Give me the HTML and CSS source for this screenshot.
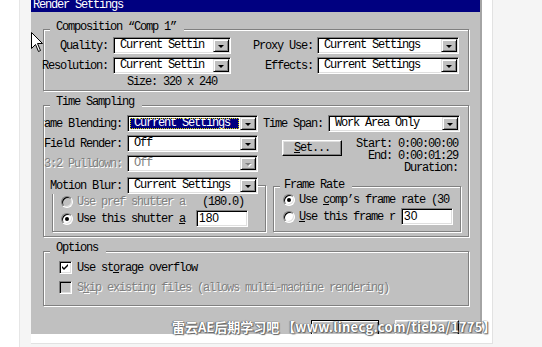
FILE: index.html
```html
<!DOCTYPE html>
<html lang="en">
<head>
  <meta charset="UTF-8" />
  <title>Render Settings</title>
  <link rel="stylesheet" href="styles.css">
</head>
<body>
  <div class="page">
    <div class="side"></div>
    <div class="frame">
      <div class="dialog">
        <div class="titlebar">Render Settings</div>

        <div class="group comp">
          <div class="group-title">Composition “Comp 1”</div>
          <div class="cols">
            <div class="col col-a">
              <div class="row">
                <span class="lbl">Quality:</span>
                <div class="combo c118"><span class="val">Current Settin</span><span class="drop"></span></div>
              </div>
              <div class="row">
                <span class="lbl">Resolution:</span>
                <div class="combo c118"><span class="val">Current Settin</span><span class="drop"></span></div>
              </div>
              <div class="size">Size: 320 x 240</div>
            </div>
            <div class="col col-b">
              <div class="row">
                <span class="lbl">Proxy Use:</span>
                <div class="combo c142"><span class="val">Current Settings</span><span class="drop"></span></div>
              </div>
              <div class="row">
                <span class="lbl">Effects:</span>
                <div class="combo c142"><span class="val">Current Settings</span><span class="drop"></span></div>
              </div>
            </div>
          </div>
        </div>

        <div class="group time">
          <div class="group-title">Time Sampling</div>
          <div class="cols">
            <div class="col col-a">
              <div class="row">
                <span class="lbl">Frame Blending:</span>
                <div class="combo c131"><span class="val sel">Current Settings</span><span class="drop"></span></div>
              </div>
              <div class="row">
                <span class="lbl">Field Render:</span>
                <div class="combo c131"><span class="val">Off</span><span class="drop"></span></div>
              </div>
              <div class="row disabled">
                <span class="lbl">3:2 Pulldown:</span>
                <div class="combo c131"><span class="val">Off</span><span class="drop"></span></div>
              </div>
            </div>
            <div class="col col-b">
              <div class="row span-row">
                <span class="lbl">Time Span:</span>
                <div class="combo c132"><span class="val">Work Area Only</span><span class="drop"></span></div>
              </div>
              <div class="set-row">
                <button class="btn set" type="button"><u>S</u>et...</button>
                <div class="times">
                  <div>Start: 0:00:00:00</div>
                  <div>End: 0:00:01:29</div>
                  <div>Duration:</div>
                </div>
              </div>
            </div>
          </div>

          <div class="subs">
            <div class="group sub blur">
              <div class="row legend">
                <span class="lbl">Motion Blur:</span>
                <div class="combo c131"><span class="val">Current Settings</span><span class="drop"></span></div>
              </div>
              <div class="opt disabled">
                <span class="radio"></span>
                <span class="opt-text">Use pref shutter a</span>
                <span class="note">(180.0)</span>
              </div>
              <div class="opt">
                <span class="radio on"></span>
                <span class="opt-text">Use this shutter <u>a</u></span>
                <span class="edit">180</span>
              </div>
            </div>
            <div class="group sub rate">
              <div class="group-title">Frame Rate</div>
              <div class="opt">
                <span class="radio on"></span>
                <span class="opt-text long">Use <u>c</u>omp’s frame rate (30</span>
              </div>
              <div class="opt">
                <span class="radio"></span>
                <span class="opt-text"><u>U</u>se this frame r</span>
                <span class="edit">30</span>
              </div>
            </div>
          </div>
        </div>

        <div class="group options">
          <div class="group-title">Options</div>
          <div class="check-row">
            <span class="check">
              <svg width="9" height="9" viewBox="0 0 9 9"><path d="M1 3 L3 5 L7 1 L7 3 L3 7 L1 5 Z" fill="#000"/></svg>
            </span>
            <span>Use st<u>o</u>rage overflow</span>
          </div>
          <div class="check-row disabled">
            <span class="check"></span>
            <span>S<u>k</u>ip existing files (allows multi-machine rendering)</span>
          </div>
        </div>

        <div class="buttons">
          <button class="btn default" type="button"></button>
          <button class="btn cancel" type="button"></button>
        </div>
      </div>
    </div>

    <div class="watermark">雷云AE后期学习吧 【<span class="url">www.linecg.com/tieba/1775</span>】</div>

    <svg class="cursor" width="12" height="20" viewBox="0 0 12 20">
      <path d="M0.5 0.5 V16.5 L4.5 12.5 L7.5 19.5 L9.5 18.5 L6.5 11.5 H11.5 Z" fill="#fff" stroke="#000" />
    </svg>
  </div>
</body>
</html>
```

FILE: styles.css
```css
body {
  margin: 0;
  background-color: #f5f5f5;
  font-family: "Liberation Mono", monospace;
  font-size: 12px;
  letter-spacing: -1.2px;
  color: #000;
}
.page {
  position: relative;
  display: flex;
  height: 347px;
  overflow: hidden;
}
.side {
  width: 19px;
  flex-shrink: 0;
  background-color: #fff;
  border-right: 1px solid #e6e6e6;
}
.frame {
  align-self: flex-start;
  margin-left: 11px;
  padding: 0 10px 9px 0;
  background-color: #fff;
  border-right: 1px solid #e2e2e2;
  border-bottom: 1px solid #e2e2e2;
}
.dialog {
  width: 449px;
  height: 334px;
  background-color: #c0c0c0;
  border-right: 2px solid #a4a4a4;
  overflow: hidden;
}
.titlebar {
  height: 12px;
  line-height: 11px;
  padding-left: 2px;
  background-color: #000080;
  color: #fff;
}

/* etched group boxes */
.group {
  box-sizing: border-box;
  margin-left: 12px;
  width: 426px;
  border: 1px solid #808080;
  box-shadow: inset 1px 1px #fff, 1px 1px #fff;
}
.comp {
  margin-top: 17px;
  height: 62px;
}
.time {
  margin-top: 14px;
  height: 132px;
}
.options {
  margin-top: 14px;
  height: 55px;
}
.group-title {
  width: fit-content;
  margin: -9px 0 0 6px;
  padding: 0 8px 0 6px;
  line-height: 12px;
  background-color: #c0c0c0;
}
.time > .group-title,
.options > .group-title {
  margin-top: -10px;
}

.cols {
  display: flex;
}
.col {
  display: flex;
  flex-direction: column;
  gap: 3px;
}
.comp .cols {
  margin-top: 4px;
}
.time .cols {
  margin-top: 7px;
}
.row {
  display: flex;
  align-items: center;
  height: 17px;
}
.lbl {
  display: flex;
  justify-content: flex-end;
  flex-shrink: 0;
  white-space: nowrap;
  margin-right: 5px;
}
.comp .col-a .lbl {
  width: 64px;
}
.comp .col-b .lbl {
  width: 82px;
  margin-right: 4px;
}
.time .col-a .lbl {
  width: 78px;
  overflow: hidden;
}
.time .col-b {
  flex: 1;
}
.span-row {
  padding-left: 5px;
}
.size {
  margin: -1px 0 0 69px;
  width: 118px;
  text-align: center;
  line-height: 12px;
}

/* combo boxes */
.combo {
  box-sizing: border-box;
  display: flex;
  height: 17px;
  padding: 1px;
  background-color: #fff;
  border: 1px solid;
  border-color: #808080 #fff #fff #808080;
  box-shadow: inset 1px 1px #000, inset -1px -1px #dfdfdf;
}
.c118 { width: 118px; }
.c131 { width: 131px; }
.c132 { width: 132px; }
.c142 { width: 142px; }
.val {
  flex: 1;
  margin: 1px;
  padding-left: 4px;
  line-height: 11px;
  white-space: nowrap;
}
.val.sel {
  background-color: #000080;
  color: #fff;
  outline: 1px dotted #d8d800;
  outline-offset: -1px;
}
.drop {
  box-sizing: border-box;
  display: flex;
  align-items: center;
  justify-content: center;
  width: 16px;
  height: 13px;
  background-color: #c0c0c0;
  border: 1px solid;
  border-color: #dfdfdf #000 #000 #dfdfdf;
  box-shadow: inset 1px 1px #fff, inset -1px -1px #808080;
}
.drop::after {
  content: "";
  margin-top: 2px;
  border-left: 3px solid transparent;
  border-right: 3px solid transparent;
  border-top: 3px solid #000;
}

.disabled {
  color: #808080;
  text-shadow: 1px 1px 0 #fff;
}
.disabled .drop::after {
  border-top-color: #808080;
  filter: drop-shadow(1px 1px 0 #fff);
}

/* buttons */
.btn {
  box-sizing: border-box;
  padding: 0;
  background-color: #c0c0c0;
  border: 1px solid;
  border-color: #fff #000 #000 #fff;
  box-shadow: inset -1px -1px #808080, inset 1px 1px #dfdfdf;
  font: inherit;
  letter-spacing: inherit;
  color: #000;
}
.set-row {
  display: flex;
  justify-content: space-between;
  margin-top: 3px;
  padding: 0 10px 0 24px;
}
.set {
  width: 60px;
  height: 16px;
  margin-top: 2px;
  line-height: 12px;
}
.times {
  text-align: right;
  line-height: 12px;
}

/* motion blur / frame rate */
.subs {
  display: flex;
  align-items: flex-start;
  margin-top: 11px;
}
.sub {
  margin-left: 0;
}
.blur {
  width: 214px;
  height: 47px;
  margin-left: 8px;
}
.rate {
  width: 188px;
  height: 46px;
  margin: 1px 0 0 7px;
}
.legend {
  width: fit-content;
  margin: -9px 0 -1px -2px;
  background-color: #c0c0c0;
}
.blur .legend .lbl {
  width: 71px;
}
.rate .group-title {
  margin: -8px 0 0 6px;
  padding-left: 4px;
}
.opt {
  display: flex;
  align-items: center;
  height: 17px;
  padding-left: 8px;
  white-space: nowrap;
}
.rate .opt {
  padding-left: 9px;
}
.rate .opt:first-of-type {
  margin-top: 2px;
}
.radio {
  box-sizing: border-box;
  display: flex;
  align-items: center;
  justify-content: center;
  width: 12px;
  height: 12px;
  margin-right: 4px;
  border-radius: 50%;
  background-color: #fff;
  border: 1px solid;
  border-color: #808080 #fff #fff #808080;
  box-shadow: inset 1px 1px #000, inset -1px -1px #dfdfdf;
}
.radio.on::after {
  content: "";
  width: 4px;
  height: 4px;
  border-radius: 50%;
  background-color: #000;
}
.disabled .radio {
  background-color: #c0c0c0;
}
.blur .opt-text {
  width: 119px;
}
.rate .opt-text {
  width: 102px;
}
.rate .opt-text.long {
  width: auto;
}
.note {
  padding-left: 6px;
  color: #000;
  text-shadow: none;
}
.edit {
  box-sizing: border-box;
  width: 52px;
  height: 17px;
  padding: 1px 2px;
  background-color: #fff;
  border: 1px solid;
  border-color: #808080 #fff #fff #808080;
  box-shadow: inset 1px 1px #000, inset -1px -1px #dfdfdf;
  font-family: "Liberation Sans", Arial, sans-serif;
  font-size: 12px;
  letter-spacing: 0;
  line-height: 13px;
}

/* options */
.check-row {
  display: flex;
  align-items: center;
  height: 13px;
  margin-top: 7px;
  padding-left: 15px;
  white-space: nowrap;
}
.options .check-row:first-of-type {
  margin-top: 8px;
}
.check {
  box-sizing: border-box;
  display: flex;
  align-items: center;
  justify-content: center;
  width: 13px;
  height: 13px;
  margin-right: 5px;
  background-color: #fff;
  border: 1px solid;
  border-color: #808080 #fff #fff #808080;
  box-shadow: inset 1px 1px #000, inset -1px -1px #dfdfdf;
}
.disabled .check {
  background-color: #c0c0c0;
}

.buttons {
  display: flex;
  margin-top: 14px;
  padding-left: 280px;
}
.buttons .btn {
  height: 23px;
}
.default {
  width: 68px;
  border-color: #000;
  box-shadow: inset 1px 1px #fff, inset -1px -1px #808080;
}
.cancel {
  width: 64px;
  margin-left: 16px;
}

/* overlays */
.watermark {
  position: absolute;
  left: 172px;
  top: 317px;
  font-family: "Noto Sans CJK SC", "Noto Sans", sans-serif;
  font-size: 13px;
  font-weight: bold;
  letter-spacing: 0;
  line-height: 19px;
  white-space: nowrap;
  color: #fff;
  text-shadow: 0 0 1px #444, 1px 1px 1px #666, -1px 0 1px #777;
}
.url {
  letter-spacing: 0.3px;
}
.cursor {
  position: absolute;
  left: 31px;
  top: 32px;
}
```
